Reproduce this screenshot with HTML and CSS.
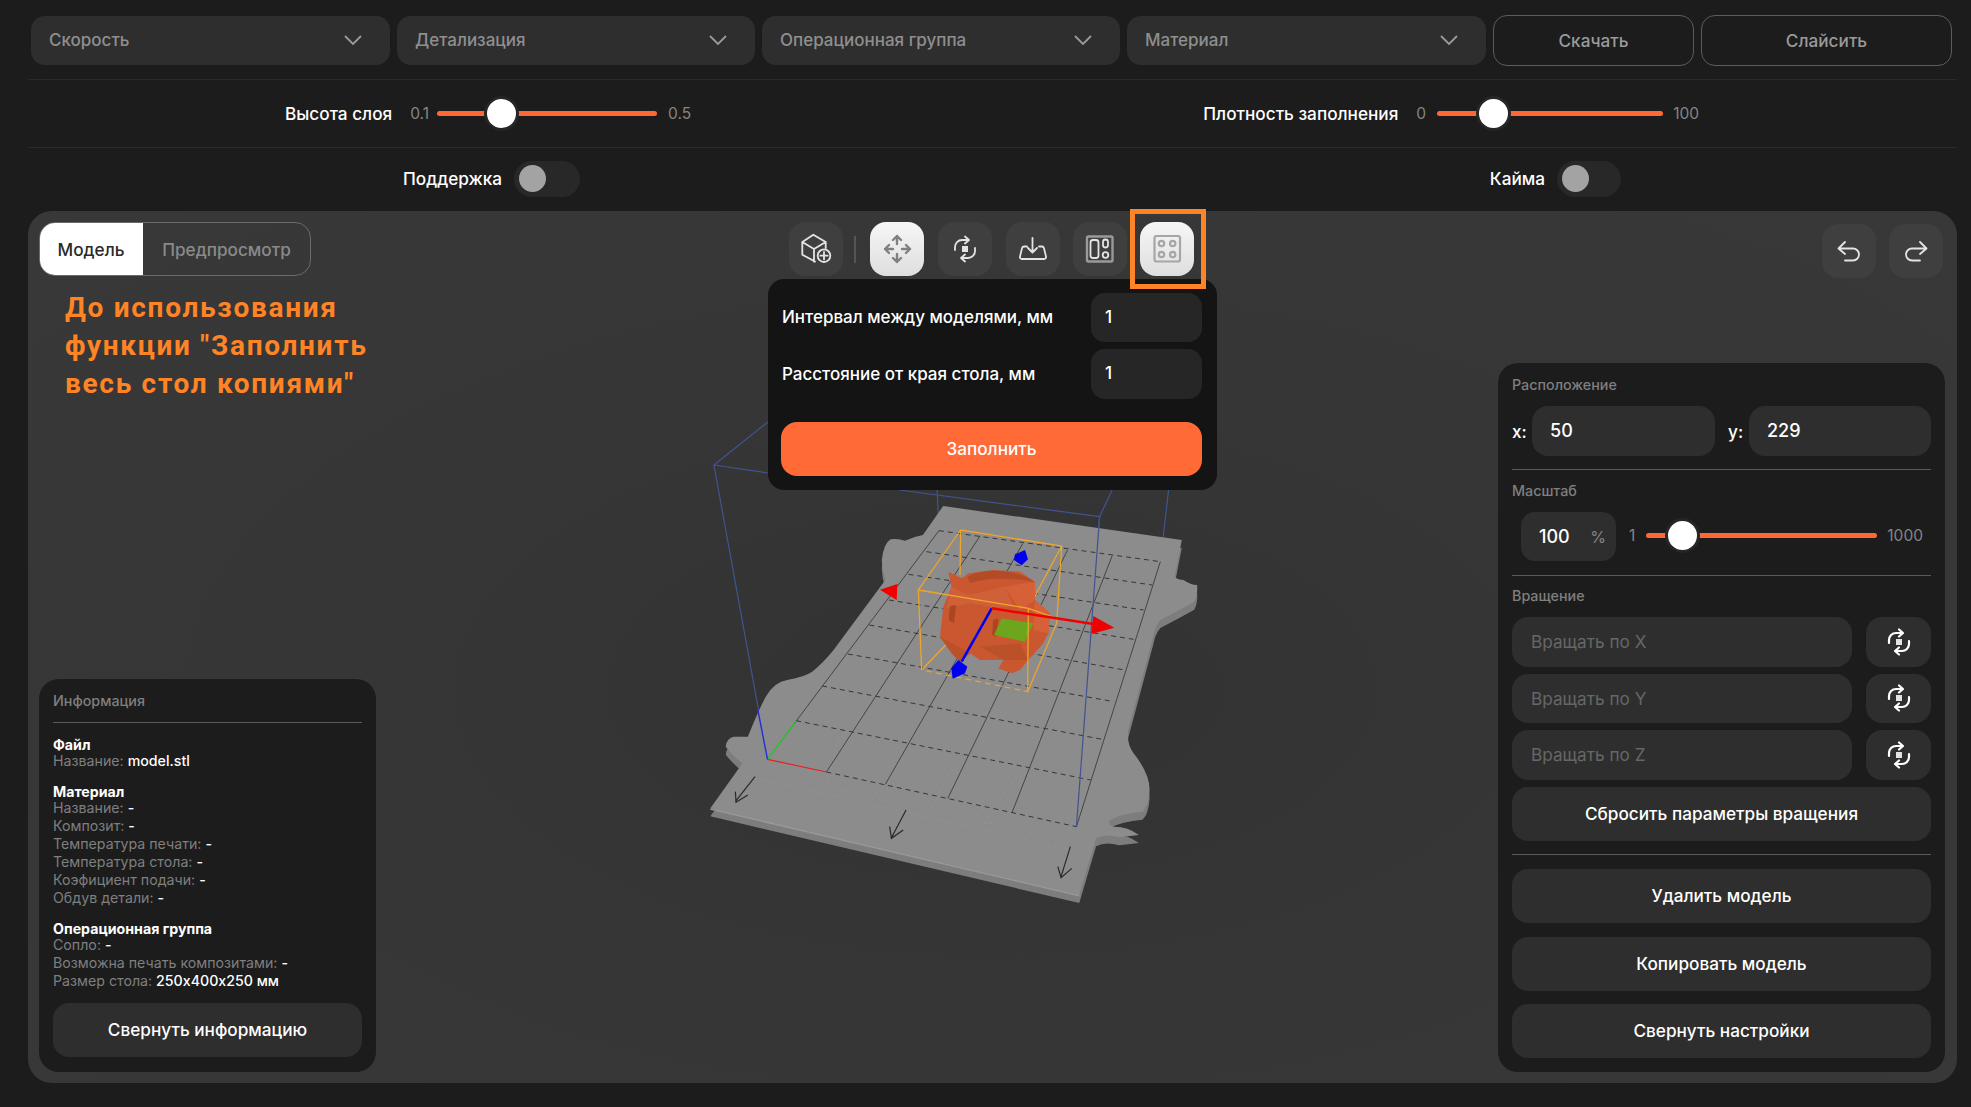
FILE: index.html
```html
<!DOCTYPE html>
<html lang="ru">
<head>
<meta charset="utf-8">
<title>Слайсер</title>
<link rel="stylesheet" href="styles.css">
</head>
<body>
<header class="topbar">
  <div class="select w359"><span>Скорость</span><svg class="chev" viewBox="0 0 18 10"><path d="M1 1l8 8 8-8"/></svg></div>
  <div class="select w358"><span>Детализация</span><svg class="chev" viewBox="0 0 18 10"><path d="M1 1l8 8 8-8"/></svg></div>
  <div class="select w358"><span>Операционная группа</span><svg class="chev" viewBox="0 0 18 10"><path d="M1 1l8 8 8-8"/></svg></div>
  <div class="select w359"><span>Материал</span><svg class="chev" viewBox="0 0 18 10"><path d="M1 1l8 8 8-8"/></svg></div>
  <div class="ghost w201">Скачать</div>
  <div class="ghost w251">Слайсить</div>
</header>

<section class="row sliders">
  <div class="slider-group">
    <span class="row-label">Высота слоя</span><span class="lim m18">0.1</span>
    <div class="track t220"><i class="thumb th-a"></i></div>
    <span class="lim">0.5</span>
  </div>
  <div class="slider-group">
    <span class="row-label">Плотность заполнения</span><span class="lim m18">0</span>
    <div class="track t226"><i class="thumb th-b"></i></div>
    <span class="lim">100</span>
  </div>
</section>

<section class="row toggles">
  <div class="toggle-group"><span class="row-label">Поддержка</span><div class="toggle t66"><i></i></div></div>
  <div class="toggle-group"><span class="row-label">Кайма</span><div class="toggle t64"><i></i></div></div>
</section>

<main class="stage">
  <svg class="scene" viewBox="28 211 1929 872" aria-hidden="true">
    <defs>
      <path id="bed" d="M737 78L1405 180L1385 290Q1395 300 1410 300Q1430 315 1448 315Q1450 345 1440 365Q1390 395 1345 420Q1330 440 1325 470L1255 750Q1250 790 1270 820Q1315 880 1315 930Q1312 980 1295 995Q1235 1000 1205 1020Q1195 1035 1215 1040Q1255 1040 1285 1065L1230 1072Q1190 1060 1165 1075L1118 1245L85 985L175 850Q150 830 128 800Q130 775 150 770L190 770Q220 690 240 650Q265 605 300 600Q350 590 370 575Q400 550 430 510L575 300Q565 270 565 240Q570 190 590 178Q610 175 630 182Q655 170 680 165Z"/>
    </defs>
    <g transform="translate(680 480) scale(.35714 .33333)">
      <g class="blue-line">
        <path d="M95 -45L246 -174M95 -45L246 -21"/>
        <path d="M95 -45L245 838M1368 30L1345 245M1175 110L1110 1040M720 30L725 152M615 30L1175 110M1210 30L1175 110"/>
      </g>
      <use href="#bed" y="24" class="bed-side"/>
      <use href="#bed" class="bed-top"/>
      <path class="bed-edge" d="M85 987L1118 1247"/>
      <g class="bed-hint">
        <path d="M210 895L1095 1110M280 750L210 895M445 770L415 905M610 800L575 950M770 850L700 990M940 890L850 1030"/>
        <path d="M285 870a35 30 0 0 0 50 25M415 905a35 30 0 0 0 55 25M550 935a35 30 0 0 0 55 25M690 970a35 30 0 0 0 55 25M830 1000a35 30 0 0 0 55 25M975 1035a35 30 0 0 0 55 25"/>
      </g>
      <g class="grid-solid">
        <path d="M725 152L245 838"/>
        <path d="M410 876L840 168M575 913L960 190M750 955L1085 210M930 997L1210 228"/>
        <path d="M1110 1040L1345 245"/>
      </g>
      <g class="grid-dash">
        <path d="M410 876L1110 1040M325 722L1150 900M398 618L1182 778M470 522L1215 665M530 435L1245 570M585 360L1270 478M640 283L1298 390M690 215L1322 315M725 152L1345 245"/>
      </g>
      <path class="axis-r" d="M245 838L410 876"/>
      <path class="axis-g" d="M245 838L325 722"/>
      <path class="axis-b" d="M245 838L218 690"/>
      <path class="blue-line" d="M1175 110L1110 1040"/>
      <g class="bed-arrow">
        <path d="M210 890L155 965M155 935L157 967L190 945"/>
        <path d="M633 990L592 1073M587 1040L592 1075L625 1050"/>
        <path d="M1093 1100L1067 1190M1058 1160L1067 1193L1097 1165"/>
      </g>
    </g>
    <g transform="translate(880 520) scale(.33333)">
      <g class="box-line">
        <path d="M242 30L545 78L530 310M242 30L240 165M242 30L115 210M545 78L445 265M125 450L240 330M443 515L530 310"/>
      </g>
      <path fill="#cb5730" d="M205 155L245 175L265 160L340 150L420 155L465 185L465 240L510 280L505 340L490 370L445 420L420 450L395 460L355 445L370 420L300 420L270 400L240 425L215 400L180 350L190 260L215 200Z"/>
      <path fill="#b34c26" d="M262 172C300 142 420 146 465 188C420 174 320 170 270 190Z"/>
      <path fill="#d0603a" d="M215 200L265 225L375 200L400 260L340 262L270 250L200 265Z"/>
      <path fill="#aa4722" d="M210 258L228 255L222 310L206 300ZM340 300L355 295L350 350L336 345Z"/>
      <path fill="#bb5129" d="M180 350L270 400L240 425L215 400ZM300 380L420 370L445 420L370 420Z"/>
      <path fill="#d66038" d="M465 240L510 280L505 340L460 330ZM375 200L465 185L465 240L420 270Z"/>
      <path fill="#6da61c" d="M365 295L460 310L435 365L342 345Z"/>
      <g class="box-line">
        <path d="M115 210L445 265L443 515L125 450ZM445 265L530 295"/>
      </g>
      <path class="box-dash" d="M125 450L443 515"/>
      <path class="gizmo-blue" d="M335 265L245 425"/>
      <path fill="#0000f0" d="M235 420L262 440L255 460L218 476L214 445Z"/>
      <path fill="#0000f0" d="M435 90L444 118L425 136L402 120L405 103Z"/>
      <path class="gizmo-red" d="M335 265L640 312"/>
      <path fill="#f00000" d="M640 288L703 323L634 342Z"/>
      <path fill="#f00000" d="M0 209L52 192L50 240Z"/>
    </g>
  </svg>

  <aside class="left">
    <div class="left-top">
      <div class="tabs"><div class="tab active">Модель</div><div class="tab">Предпросмотр</div></div>
      <p class="note">До использования<br>функции "Заполнить<br>весь стол копиями"</p>
    </div>
    <div class="panel info">
      <div class="panel-title">Информация</div>
      <div class="divider info-div"></div>
      <div class="info-block">
        <div class="info-head">Файл</div>
        <div class="info-row">Название: <b>model.stl</b></div>
      </div>
      <div class="info-block">
        <div class="info-head">Материал</div>
        <div class="info-row">Название: <b>-</b></div>
        <div class="info-row">Композит: <b>-</b></div>
        <div class="info-row">Температура печати: <b>-</b></div>
        <div class="info-row">Температура стола: <b>-</b></div>
        <div class="info-row">Коэфициент подачи: <b>-</b></div>
        <div class="info-row">Обдув детали: <b>-</b></div>
      </div>
      <div class="info-block">
        <div class="info-head">Операционная группа</div>
        <div class="info-row">Сопло: <b>-</b></div>
        <div class="info-row">Возможна печать композитами: <b>-</b></div>
        <div class="info-row">Размер стола: <b>250x400x250 мм</b></div>
      </div>
      <div class="btn mt13">Свернуть информацию</div>
    </div>
  </aside>

  <div class="center">
    <div class="toolbar">
      <div class="tool"><svg viewBox="0 0 54 54" class="ic-w"><path d="M24.3 12.7L36.7 20V26M24.3 12.7L13.3 20V32.7L26 39.5M13.3 20L25 27L36.7 20M25 27V39.5"/><circle cx="35" cy="33.7" r="6.3"/><path d="M35 30v7.4M31.3 33.7h7.4"/></svg></div>
      <span class="tool-sep"></span>
      <div class="tool on"><svg viewBox="0 0 54 54" class="ic-g"><path d="M27 14v8M23 18l4-4 4 4M27 40v-8M23 36l4 4 4-4M15 27h8M19 23l-4 4 4 4M40 27h-8M36 23l4 4-4 4"/></svg></div>
      <div class="tool"><svg viewBox="0 0 54 54" class="ic-w"><path d="M17 28v-3a7 7 0 0 1 7-7h6M27 14.500l4 3.500-4 3.500M37 26v3a7 7 0 0 1-7 7h-6M27 32.500l-4 3.500 4 3.500"/><rect class="fill-w" x="24" y="24" width="6" height="6"/></svg></div>
      <div class="tool"><svg viewBox="0 0 54 54" class="ic-w"><path d="M21 24.500h-3a2 2 0 0 0-1.900 1.400L14 34.500a2 2 0 0 0 1.900 2.500h22.200a2 2 0 0 0 1.900-2.500l-2.100-8.600a2 2 0 0 0-1.900-1.400h-3M26.500 16v14M22 26l4.500 4.500L31 26"/></svg></div>
      <div class="tool tight"><svg viewBox="0 0 54 54" class="ic-w"><rect class="ic-gray" x="14" y="14.500" width="25.500" height="25" rx="1.500"/><rect x="17.500" y="18" width="8" height="18" rx="2.500"/><rect x="30" y="17.500" width="5" height="8" rx="2.500"/><circle cx="32.500" cy="33" r="2.800"/></svg></div>
      <div class="tool on tight marked">
        <svg viewBox="0 0 54 54" class="ic-l"><rect x="14.500" y="14" width="25.500" height="25.500" rx="2"/><circle cx="21.500" cy="21.500" r="2.700"/><circle cx="32.700" cy="21.500" r="2.700"/><circle cx="21.500" cy="32.500" r="2.700"/><circle cx="32.700" cy="32.500" r="2.700"/></svg>
        <span class="mark"></span>
      </div>
    </div>
    <div class="popup">
      <div class="pop-row"><span class="pop-label">Интервал между моделями, мм</span><div class="pop-input">1</div></div>
      <div class="pop-row r2"><span class="pop-label">Расстояние от края стола, мм</span><div class="pop-input h50">1</div></div>
      <div class="fill-btn">Заполнить</div>
    </div>
  </div>

  <aside class="right">
    <div class="history">
      <div class="tool"><svg viewBox="0 0 54 54" class="ic-w"><path d="M23 18l-6.500 6.500L23 30M17 24.500h14a6 6 0 0 1 0 12h-8"/></svg></div>
      <div class="tool"><svg viewBox="0 0 54 54" class="ic-w"><path d="M31 18l6.500 6.500L31 30M37 24.500H23a6 6 0 0 0 0 12h8"/></svg></div>
    </div>
    <div class="panel settings">
      <div class="panel-title">Расположение</div>
      <div class="pos-row">
        <span class="pos-l">x:</span><div class="field pos-a">50</div>
        <span class="pos-l gap">y:</span><div class="field pos-b">229</div>
      </div>
      <div class="divider d13"></div>
      <div class="panel-title">Масштаб</div>
      <div class="scale-row">
        <div class="scale-box"><span>100</span><em>%</em></div>
        <span class="lim s1">1</span>
        <div class="track t231"><i class="thumb th-c"></i></div>
        <span class="lim">1000</span>
      </div>
      <div class="divider d14"></div>
      <div class="panel-title rot">Вращение</div>
      <div class="rot-list">
        <div class="rot-row"><div class="rot-input">Вращать по X</div><div class="rot-btn"><svg viewBox="0 0 54 54" class="ic-w"><path d="M17 28v-3a7 7 0 0 1 7-7h6M27 14.500l4 3.500-4 3.500M37 26v3a7 7 0 0 1-7 7h-6M27 32.500l-4 3.500 4 3.500"/><rect class="fill-w" x="24" y="24" width="6" height="6"/></svg></div></div>
        <div class="rot-row"><div class="rot-input">Вращать по Y</div><div class="rot-btn"><svg viewBox="0 0 54 54" class="ic-w"><path d="M17 28v-3a7 7 0 0 1 7-7h6M27 14.500l4 3.500-4 3.500M37 26v3a7 7 0 0 1-7 7h-6M27 32.500l-4 3.500 4 3.500"/><rect class="fill-w" x="24" y="24" width="6" height="6"/></svg></div></div>
        <div class="rot-row"><div class="rot-input">Вращать по Z</div><div class="rot-btn"><svg viewBox="0 0 54 54" class="ic-w"><path d="M17 28v-3a7 7 0 0 1 7-7h6M27 14.500l4 3.500-4 3.500M37 26v3a7 7 0 0 1-7 7h-6M27 32.500l-4 3.500 4 3.500"/><rect class="fill-w" x="24" y="24" width="6" height="6"/></svg></div></div>
        <div class="btn">Сбросить параметры вращения</div>
      </div>
      <div class="divider d13b"></div>
      <div class="btn">Удалить модель</div>
      <div class="btn mt14">Копировать модель</div>
      <div class="btn mt13">Свернуть настройки</div>
    </div>
  </aside>
</main>
</body>
</html>
```

FILE: styles.css
```css
* { box-sizing: border-box; }
html, body { margin: 0; height: 100%; }
body {
  width: 1971px;
  height: 1107px;
  overflow: hidden;
  background: #1c1c1c;
  color: #fff;
  font-family: Inter, "Noto Sans", sans-serif;
  font-size: 17.200px;
  font-weight: 500;
}

.topbar { display: flex; align-items: center; gap: 7px; height: 79px; padding: 1px 0 0 31px; }
.select {
  display: flex; align-items: center; justify-content: space-between;
  height: 49px; padding: 0 28px 0 18px;
  background: #2e2e2e; border-radius: 14px; color: #8f8f8f; font-size: 17px;
}
.w359 { width: 359px; }
.w358 { width: 358px; }
.chev { width: 18px; height: 10px; fill: none; stroke: #9a9a9a; stroke-width: 1.8; }
.ghost {
  display: flex; align-items: center; justify-content: center;
  height: 51px; border: 1px solid #5c5c5c; border-radius: 14px; color: #9a9a9a;
}
.w201 { width: 201px; }
.w251 { width: 251px; }

.row { display: flex; justify-content: space-between; align-items: center; margin: 0 14px 0 28px; border-top: 1px solid #2a2a2a; }
.sliders { height: 68px; padding: 0 258px 0 257px; }
.toggles { height: 64px; padding: 0 336px 2px 375px; }
.slider-group, .toggle-group { display: flex; align-items: center; }
.toggle-group { gap: 12px; }
.row-label { color: #fff; }
.lim { color: #858585; font-size: 15.500px; font-weight: 400; }
.m18 { margin-left: 18px; }
.track { position: relative; height: 5px; margin: 0 10px 0 11px; background: #ff6835; border-radius: 3px; }
.t220 { width: 220px; margin: 0 11px 0 8px; }
.t226 { width: 226px; }
.t231 { width: 231px; }
.thumb {
  position: absolute; top: -15px; width: 35px; height: 35px; margin-left: -17.500px;
  background: #fff; border: 3px solid #262626; border-radius: 50%;
}
.th-a { left: 64px; }
.th-b { left: 56px; }
.th-c { left: 36px; }
.toggle { display: flex; align-items: center; height: 36px; padding-left: 5px; background: #282828; border-radius: 18px; }
.t66 { width: 66px; }
.t64 { width: 64px; }
.toggle i { width: 27px; height: 27px; background: #a3a3a3; border-radius: 50%; }

.stage {
  position: relative;
  display: flex;
  height: 872px;
  margin: 0 14px 0 28px;
  padding: 11px 12px 11px 11px;
  background: radial-gradient(ellipse at 50% 55%, #323232 0%, #363636 45%, #383838 100%);
  border-radius: 24px;
}
.scene { position: absolute; inset: 0; width: 100%; height: 100%; }
.blue-line path, .blue-line { fill: none; stroke: #40548f; stroke-width: 1.2; vector-effect: non-scaling-stroke; }
.bed-side { fill: #7d7d7d; }
.bed-top { fill: #8c8c8c; }
.bed-edge { fill: none; stroke: #989898; stroke-width: 1.500; vector-effect: non-scaling-stroke; }
.bed-hint path { fill: none; stroke: #9a9a9a; stroke-width: 1; stroke-dasharray: 3 3; vector-effect: non-scaling-stroke; opacity: .5; }
.grid-solid path { fill: none; stroke: #454545; stroke-width: 1; vector-effect: non-scaling-stroke; }
.grid-dash path { fill: none; stroke: #363636; stroke-width: 1; stroke-dasharray: 5 4; vector-effect: non-scaling-stroke; }
.axis-r { stroke: #e62020; stroke-width: 1.2; vector-effect: non-scaling-stroke; }
.axis-g { stroke: #22d422; stroke-width: 1.2; vector-effect: non-scaling-stroke; }
.axis-b { stroke: #2230d8; stroke-width: 1.4; vector-effect: non-scaling-stroke; }
.bed-arrow path { fill: none; stroke: #2a2a2a; stroke-width: 1.2; vector-effect: non-scaling-stroke; }
.box-line path { fill: none; stroke: #eea52a; stroke-width: 1.3; vector-effect: non-scaling-stroke; }
.box-dash { fill: none; stroke: #8c8c8c; stroke-width: 1.4; stroke-dasharray: 5 5; vector-effect: non-scaling-stroke; }
.gizmo-blue { stroke: #0000f0; stroke-width: 2.500; vector-effect: non-scaling-stroke; }
.gizmo-red { stroke: #f00000; stroke-width: 2.500; vector-effect: non-scaling-stroke; }

.left, .center, .right { position: relative; display: flex; flex-direction: column; }
.left { width: 337px; justify-content: space-between; }
.center { width: 449px; margin-left: 392px; }
.right { width: 447px; margin-left: auto; justify-content: space-between; }

.tabs { display: flex; width: 272px; height: 54px; border: 1px solid #6a6a6a; border-radius: 16px; overflow: hidden; color: #8a8a8a; }
.tab { display: flex; align-items: center; justify-content: center; flex: 1; }
.tab.active { flex: 0 0 104px; margin: -1px 0 -1px -1px; background: #fff; color: #2a2a2a; }
.note {
  margin: 13px 0 0 26px;
  color: #ff8426;
  font-family: Roboto, sans-serif;
  font-size: 28px;
  font-weight: 700;
  line-height: 38px;
  letter-spacing: 1.700px;
}

.panel { background: #1c1c1c; border-radius: 20px; }
.panel-title { height: 18px; color: #7f7f7f; font-size: 14.300px; line-height: 18px; }
.divider { height: 1px; background: #5a5a5a; }
.info { height: 393px; padding: 13px 14px 15px; }
.info-div { margin-top: 12px; }
.info-block { margin-top: 14px; }
.info-block:first-of-type { margin-top: 13px; }
.info-head { color: #fff; font-size: 14.200px; font-weight: 700; line-height: 15px; }
.info-row { color: #7f7f7f; font-size: 14.200px; font-weight: 400; line-height: 18px; }
.info-row b { color: #fff; font-weight: 500; font-feature-settings: "calt" 0; }
.btn { display: flex; align-items: center; justify-content: center; height: 54px; padding-bottom: 1px; background: #2e2e2e; border-radius: 16px; color: #fff; }
.mt13 { margin-top: 13px; }
.mt14 { margin-top: 14px; }

.toolbar { display: flex; align-items: center; gap: 14px; height: 54px; padding-left: 21px; }
.tool { position: relative; flex: none; width: 54px; height: 54px; background: #3f3f3f; border-radius: 16px; }
.tool svg { display: block; width: 54px; height: 54px; }
.tool.on { background: linear-gradient(#f6f6f6, #dedede); }
.tool-sep { width: 2px; height: 27px; margin-left: -3px; background: #555; }
.tool.tight { margin-left: -1px; }
.mark { position: absolute; top: -13px; left: -10px; width: 76px; height: 80px; border: 5px solid #ff8426; z-index: 3; }
.ic-w { fill: none; stroke: #e4e4e4; stroke-width: 1.800; stroke-linecap: round; stroke-linejoin: round; }
.ic-g { fill: none; stroke: #808080; stroke-width: 2.400; stroke-linecap: round; stroke-linejoin: round; }
.ic-l { fill: none; stroke: #a6a6a6; stroke-width: 2.200; }
.ic-gray { stroke: #9a9a9a; stroke-width: 2.400; }
.fill-w { fill: #e4e4e4; stroke: none; }

.popup { margin-top: 3px; padding: 14px 15px 14px 13px; height: 211px; background: #141414; border-radius: 16px; position: relative; z-index: 2; }
.pop-row { display: flex; align-items: center; justify-content: space-between; }
.pop-row.r2 { margin-top: 7px; }
.pop-label { margin: -1px 0 0 1px; font-size: 17px; }
.pop-input { width: 111px; height: 49px; padding: 14px 14px 0 14px; background: #262626; border-radius: 14px; line-height: 20px; }
.pop-input.h50 { height: 50px; padding-top: 14px; }
.fill-btn { display: flex; align-items: center; justify-content: center; height: 54px; margin-top: 23px; padding-bottom: 1px; background: #ff6a37; border-radius: 16px; color: #fff; }

.history { display: flex; justify-content: flex-end; gap: 13px; padding: 2px 2px 0 0; }
.settings { height: 709px; padding: 13px 14px 15px; }
.pos-row { display: flex; align-items: center; margin-top: 12px; }
.pos-l { width: 20px; }
.pos-l.gap { margin-left: 13px; width: 21px; }
.field { height: 50px; padding: 0 18px; line-height: 50px; background: #2e2e2e; border-radius: 16px; font-size: 18px; }
.pos-a { width: 183px; }
.pos-b { width: 182px; }
.d13 { margin: 13px 0 12px; }
.d14 { margin: 14px 0; }
.d13b { margin: 13px 0 14px; }
.scale-row { display: flex; align-items: center; margin: 12px 0 0 9px; height: 49px; }
.scale-row .lim, .scale-row .track { margin-bottom: 3px; }
.scale-box { display: flex; align-items: center; justify-content: space-between; width: 95px; height: 49px; padding: 0 10px 0 18px; background: #2e2e2e; border-radius: 14px; font-size: 18px; }
.scale-box em { color: #858585; font-style: normal; font-size: 16px; font-weight: 400; }
.s1 { margin-left: 13px; }
.panel-title.rot { margin-top: -3px; }
.rot-list { display: flex; flex-direction: column; gap: 7px; margin-top: 12px; }
.rot-row { display: flex; justify-content: space-between; height: 49.500px; }
.rot-input { display: flex; align-items: center; width: 340px; padding-left: 19px; background: #2e2e2e; border-radius: 16px; color: #666; font-weight: 400; }
.rot-btn { display: flex; align-items: center; justify-content: center; width: 65px; background: #2e2e2e; border-radius: 16px; }
.rot-btn svg { width: 54px; height: 54px; stroke: #fff; stroke-width: 2.200; flex: none; }
```
